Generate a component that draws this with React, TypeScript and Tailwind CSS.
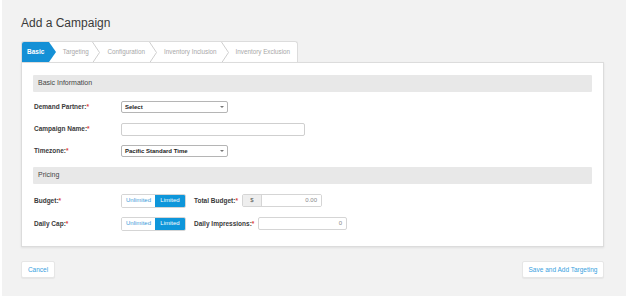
const tabs = [
  { label: 'Targeting', w: 'w-[45px]' },
  { label: 'Configuration', w: 'w-[57px]' },
  { label: 'Inventory Inclusion', w: 'w-[72px]' },
  { label: 'Inventory Exclusion', w: 'w-[69px]' },
]

const Req = () => <span className="text-[#e0403a]">*</span>

const Label = ({ text, className = '' }: { text: string; className?: string }) => (
  <div className={`text-[6.5px] font-bold whitespace-nowrap text-[#3a3a3a] ${className}`}>
    {text}:<Req />
  </div>
)

const SelectBox = ({ value }: { value: string }) => (
  <div className="flex h-[12px] w-[107px] items-center justify-between rounded-[2px] border border-[#b5b5b5] bg-white pr-[3px] pl-[3px] text-[6px] font-bold text-[#222]">
    <span>{value}</span>
    <span className="h-0 w-0 border-x-[2px] border-t-[2.5px] border-x-transparent border-t-[#777]" />
  </div>
)

const Toggle = () => (
  <div className="flex h-[14px] overflow-hidden rounded-[2px] border border-[#d5d5d5] text-[6px]">
    <div className="flex w-[33px] items-center justify-center bg-white text-[#3a9ad9]">Unlimited</div>
    <div className="flex w-[30px] items-center justify-center bg-[#0e96da] text-white">Limited</div>
  </div>
)

const SectionHeader = ({ title }: { title: string }) => (
  <div className="flex h-[17px] items-center rounded-[1px] bg-[#e8e8e8] pl-[5px] text-[7px] text-[#444]">
    {title}
  </div>
)

export default function App() {
  return (
    <div className="h-[299px] w-[628px] bg-white px-[2px] pb-[3px] font-['Liberation_Sans',Arial,sans-serif]">
      <div className="h-full bg-[#f2f2f2] pt-[16px] pr-[22px] pl-[19px]">
        <h1 className="h-[14px] text-[12px] leading-[14px] text-[#3a3a3a]">Add a Campaign</h1>

        {/* wizard tabs */}
        <div className="mt-[11px] flex h-[21px] w-[277px] overflow-hidden rounded-t-[3px] border border-b-0 border-[#dcdcdc] bg-white">
          <div className="-ml-px flex w-[35px] items-center bg-[#1490d6] pl-[6px] text-[6.5px] font-bold text-white [clip-path:polygon(0_0,28px_0,35px_50%,28px_100%,0_100%)]">
            Basic
          </div>
          {tabs.map((t, i) => (
            <div key={i} className={`flex ${t.w} items-center`}>
              <span className="flex-1 pl-[7px] text-[6.3px] whitespace-nowrap text-[#a8a8a8]">{t.label}</span>
              {i < tabs.length - 1 && (
                <svg width="8" height="21" viewBox="0 0 8 21" className="shrink-0">
                  <polyline points="0.5,0 7.5,10.5 0.5,21" fill="none" stroke="#cfcfcf" strokeWidth="1" />
                </svg>
              )}
            </div>
          ))}
        </div>

        {/* form panel */}
        <div className="h-[185px] w-[583px] border border-[#dcdcdc] bg-white px-[11px] pt-[12px] shadow-[0_1px_2px_rgba(0,0,0,0.08)]">
          <SectionHeader title="Basic Information" />
          <div className="mt-[4px] pl-[1px]">
            <div className="flex h-[22px] items-center">
              <Label text="Demand Partner" className="w-[87px]" />
              <SelectBox value="Select" />
            </div>
            <div className="flex h-[22px] items-center">
              <Label text="Campaign Name" className="w-[87px]" />
              <div className="h-[13px] w-[184px] rounded-[2px] border border-[#cfcfcf] bg-white" />
            </div>
            <div className="flex h-[22px] items-center">
              <Label text="Timezone" className="w-[87px]" />
              <SelectBox value="Pacific Standard Time" />
            </div>
          </div>

          <div className="mt-[5px]">
            <SectionHeader title="Pricing" />
          </div>
          <div className="mt-[5px] pl-[1px]">
            <div className="flex h-[23px] items-center">
              <Label text="Budget" className="w-[87px]" />
              <Toggle />
              <Label text="Total Budget" className="ml-[8px] w-[48px]" />
              <div className="flex h-[13px] overflow-hidden rounded-[2px] border border-[#d5d5d5] text-[6px]">
                <div className="flex w-[19px] items-center justify-center border-r border-[#d5d5d5] bg-[#eeeeee] text-[#555]">$</div>
                <div className="flex w-[59px] items-center justify-end bg-white pr-[4px] text-[#888]">0.00</div>
              </div>
            </div>
            <div className="flex h-[23px] items-center">
              <Label text="Daily Cap" className="w-[87px]" />
              <Toggle />
              <Label text="Daily Impressions" className="ml-[8px] w-[64px]" />
              <div className="flex h-[13px] w-[89px] items-center justify-end rounded-[2px] border border-[#d5d5d5] bg-white pr-[4px] text-[6px] text-[#888]">
                0
              </div>
            </div>
          </div>
        </div>

        {/* footer buttons */}
        <div className="mt-[14px] flex w-[583px] justify-between">
          <button className="h-[17px] w-[34px] rounded-[2px] border border-[#e6e6e6] bg-white text-[6.5px] text-[#3a9fe0] shadow-[0_1px_1px_rgba(0,0,0,0.05)]">
            Cancel
          </button>
          <button className="h-[17px] w-[82px] rounded-[2px] border border-[#e6e6e6] bg-white text-[6.5px] text-[#3a9fe0] shadow-[0_1px_1px_rgba(0,0,0,0.05)]">
            Save and Add Targeting
          </button>
        </div>
      </div>
    </div>
  )
}
